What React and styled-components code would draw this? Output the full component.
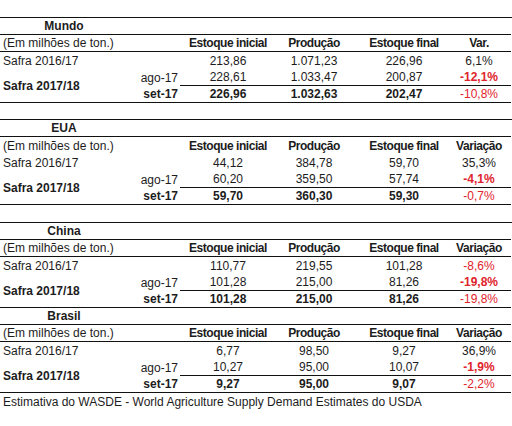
import React from "react";
import styled, { createGlobalStyle } from "styled-components";

const GlobalStyle = createGlobalStyle`
  * { box-sizing: border-box; }
  body {
    margin: 0;
    background: #fff;
    font-family: "Liberation Sans", Arial, sans-serif;
    color: #1c1c1c;
  }
`;

const Sheet = styled.div`
  width: 512px;
  padding-top: 17px;
  font-size: 12px;
`;

const Section = styled.div`
  display: grid;
  grid-template-columns: 128px 52px 96px 76px 104px 55px;
  grid-auto-rows: 17px;
  margin-top: ${p => p.$gap || 0}px;
  border-top: ${p => (p.$topLine ? "1px solid #111" : "none")};
`;

const Cell = styled.div`
  display: flex;
  align-items: center;
  justify-content: ${p =>
    p.$align === "left" ? "flex-start" : p.$align === "right" ? "flex-end" : "center"};
  padding: ${p => p.$pad || "0"};
  font-weight: ${p => (p.$bold ? 700 : 400)};
  color: ${p => (p.$red ? "#e0242c" : "inherit")};
  border-bottom: ${p => (p.$line ? "1px solid #111" : "none")};
  grid-row: ${p => (p.$span ? `span ${p.$span}` : "auto")};
  grid-column: ${p => (p.$cols ? `span ${p.$cols}` : "auto")};
  white-space: nowrap;
  letter-spacing: ${p => (p.$tight ? "-0.45px" : "normal")};
`;

const Footer = styled.div`
  height: 17px;
  display: flex;
  align-items: center;
  padding-left: 3px;
`;

const sections = [
  {
    title: "Mundo",
    topLine: true,
    headerLine: true,
    varLabel: "Var.",
    gap: 0,
    safra: ["213,86", "1.071,23", "226,96", "6,1%"],
    ago: ["228,61", "1.033,47", "200,87", "-12,1%"],
    set: ["226,96", "1.032,63", "202,47", "-10,8%"],
  },
  {
    title: "EUA",
    topLine: true,
    headerLine: false,
    varLabel: "Variação",
    gap: 16,
    safra: ["44,12", "384,78", "59,70", "35,3%"],
    ago: ["60,20", "359,50", "57,74", "-4,1%"],
    set: ["59,70", "360,30", "59,30", "-0,7%"],
  },
  {
    title: "China",
    topLine: true,
    headerLine: true,
    varLabel: "Variação",
    gap: 17,
    safra: ["110,77", "219,55", "101,28", "-8,6%"],
    ago: ["101,28", "215,00", "81,26", "-19,8%"],
    set: ["101,28", "215,00", "81,26", "-19,8%"],
  },
  {
    title: "Brasil",
    topLine: false,
    headerLine: true,
    varLabel: "Variação",
    gap: 0,
    safra: ["6,77", "98,50", "9,27", "36,9%"],
    ago: ["10,27", "95,00", "10,07", "-1,9%"],
    set: ["9,27", "95,00", "9,07", "-2,2%"],
  },
];

const isNeg = v => v.startsWith("-");

const ValueCells = ({ values, bold, line, redBold }) =>
  values.map((v, i) => {
    const last = i === values.length - 1;
    return (
      <Cell
        key={i}
        $bold={last ? redBold && isNeg(v) : bold}
        $red={last && isNeg(v)}
        $line={line}
        $pad={last ? "0 9px 0 0" : "0"}
      >
        {v}
      </Cell>
    );
  });

const Block = ({ data }) => (
  <Section $topLine={data.topLine} $gap={data.gap}>
    <Cell $bold $line>{data.title}</Cell>
    <Cell $line $cols={5} />

    <Cell $align="left" $pad="0 0 0 3px" $line={data.headerLine} $cols={2}>
      (Em milhões de ton.)
    </Cell>
    <Cell $bold $tight $line={data.headerLine}>Estoque inicial</Cell>
    <Cell $bold $tight $line={data.headerLine}>Produção</Cell>
    <Cell $bold $tight $line={data.headerLine}>Estoque final</Cell>
    <Cell $bold $tight $line={data.headerLine} $pad="0 9px 0 0">
      {data.varLabel}
    </Cell>

    <Cell $align="left" $pad="0 0 0 3px" $cols={2}>Safra 2016/17</Cell>
    <ValueCells values={data.safra} />

    <Cell $align="left" $pad="0 0 0 3px" $bold $span={2} $line>Safra 2017/18</Cell>
    <Cell $align="right" $pad="0 2px 0 0">ago-17</Cell>
    <ValueCells values={data.ago} line redBold />

    <Cell $align="right" $pad="0 2px 0 0" $bold $line>set-17</Cell>
    <ValueCells values={data.set} bold line />
  </Section>
);

export default function App() {
  return (
    <>
      <GlobalStyle />
      <Sheet>
        {sections.map(s => (
          <Block key={s.title} data={s} />
        ))}
        <Footer>Estimativa do WASDE - World Agriculture Supply Demand Estimates do USDA</Footer>
      </Sheet>
    </>
  );
}
